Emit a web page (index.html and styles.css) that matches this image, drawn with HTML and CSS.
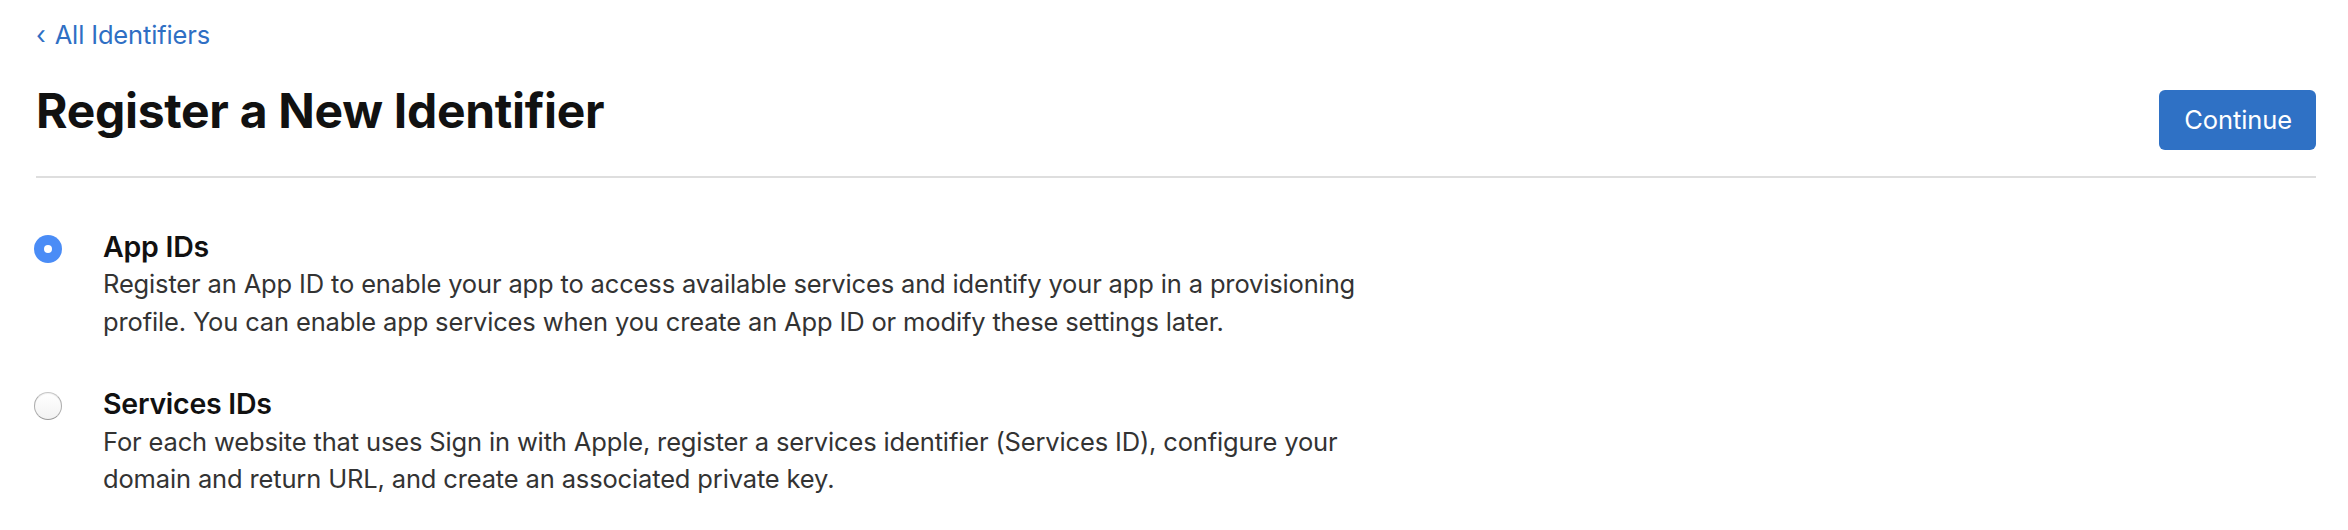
FILE: index.html
```html
<!DOCTYPE html>
<html lang="en">
<head>
<meta charset="utf-8">
<title>Register a New Identifier</title>
<link rel="stylesheet" href="styles.css">
</head>
<body>
<div class="page">
  <a class="back" href="#"><span class="chev">&lsaquo;</span> All Identifiers</a>
  <header class="header">
    <h1 class="title">Register a New Identifier</h1>
    <button class="btn" type="button">Continue</button>
  </header>
  <div class="options">
    <label class="option">
      <span class="radio radio-on"></span>
      <span class="body">
        <span class="name">App IDs</span>
        <span class="desc">Register an App ID to enable your app to access available services and identify your app in a provisioning profile. You can enable app services when you create an App ID or modify these settings later.</span>
      </span>
    </label>
    <label class="option">
      <span class="radio"></span>
      <span class="body">
        <span class="name">Services IDs</span>
        <span class="desc">For each website that uses Sign in with Apple, register a services identifier (Services ID), configure your domain and return URL, and create an associated private key.</span>
      </span>
    </label>
  </div>
</div>
</body>
</html>
```
FILE: styles.css
```css
html, body {
  margin: 0;
  padding: 0;
  background: #ffffff;
}
body {
  font-family: Inter, "Noto Sans", "Liberation Sans", sans-serif;
  color: #333333;
}
.page {
  padding: 16px 32px 0 36px;
}
.back {
  display: block;
  font-size: 25.5px;
  line-height: 37.5px;
  color: #2f6fc4;
  text-decoration: none;
  letter-spacing: -0.15px;
}
.chev {
  display: inline-block;
  margin-right: 2px;
}
.header {
  display: flex;
  justify-content: space-between;
  align-items: flex-start;
  padding-bottom: 26px;
  border-bottom: 2px solid #dedede;
}
.title {
  margin: 30px 0 0 0;
  font-size: 48px;
  line-height: 54px;
  font-weight: 700;
  color: #111111;
  letter-spacing: -0.3px;
}
.btn {
  margin-top: 36px;
  height: 60.5px;
  padding: 0 24px 0 25px;
  border: 0;
  border-radius: 6px;
  background: #2f71c5;
  color: #ffffff;
  font-family: inherit;
  font-size: 25.5px;
  letter-spacing: -0.1px;
}
.options {
  display: flex;
  flex-direction: column;
  gap: 46px;
  padding-top: 50.5px;
}
.option {
  display: flex;
  align-items: flex-start;
  gap: 41px;
  margin-left: -2px;
}
.radio {
  flex: none;
  box-sizing: border-box;
  width: 28px;
  height: 28px;
  margin-top: 6px;
  border-radius: 50%;
  background: linear-gradient(#ffffff, #f2f2f2);
  border: 1.5px solid #b2b2b2;
  border-color: #c6c6c6 #adadad #999999 #adadad;
  box-shadow: inset 0 1px 1px rgba(0, 0, 0, 0.06);
  display: flex;
  align-items: center;
  justify-content: center;
}
.radio-on {
  background: #4a8cf6;
  border: 0;
  box-shadow: none;
}
.radio-on::after {
  content: "";
  width: 8px;
  height: 8px;
  border-radius: 50%;
  background: #ffffff;
}
.body {
  display: flex;
  flex-direction: column;
  max-width: 1290px;
}
.name {
  font-size: 28.5px;
  line-height: 36px;
  font-weight: 600;
  color: #111111;
  letter-spacing: -0.25px;
}
.desc {
  margin-top: 0.5px;
  font-size: 25.5px;
  line-height: 37.5px;
  color: #333333;
  letter-spacing: -0.15px;
}
```
